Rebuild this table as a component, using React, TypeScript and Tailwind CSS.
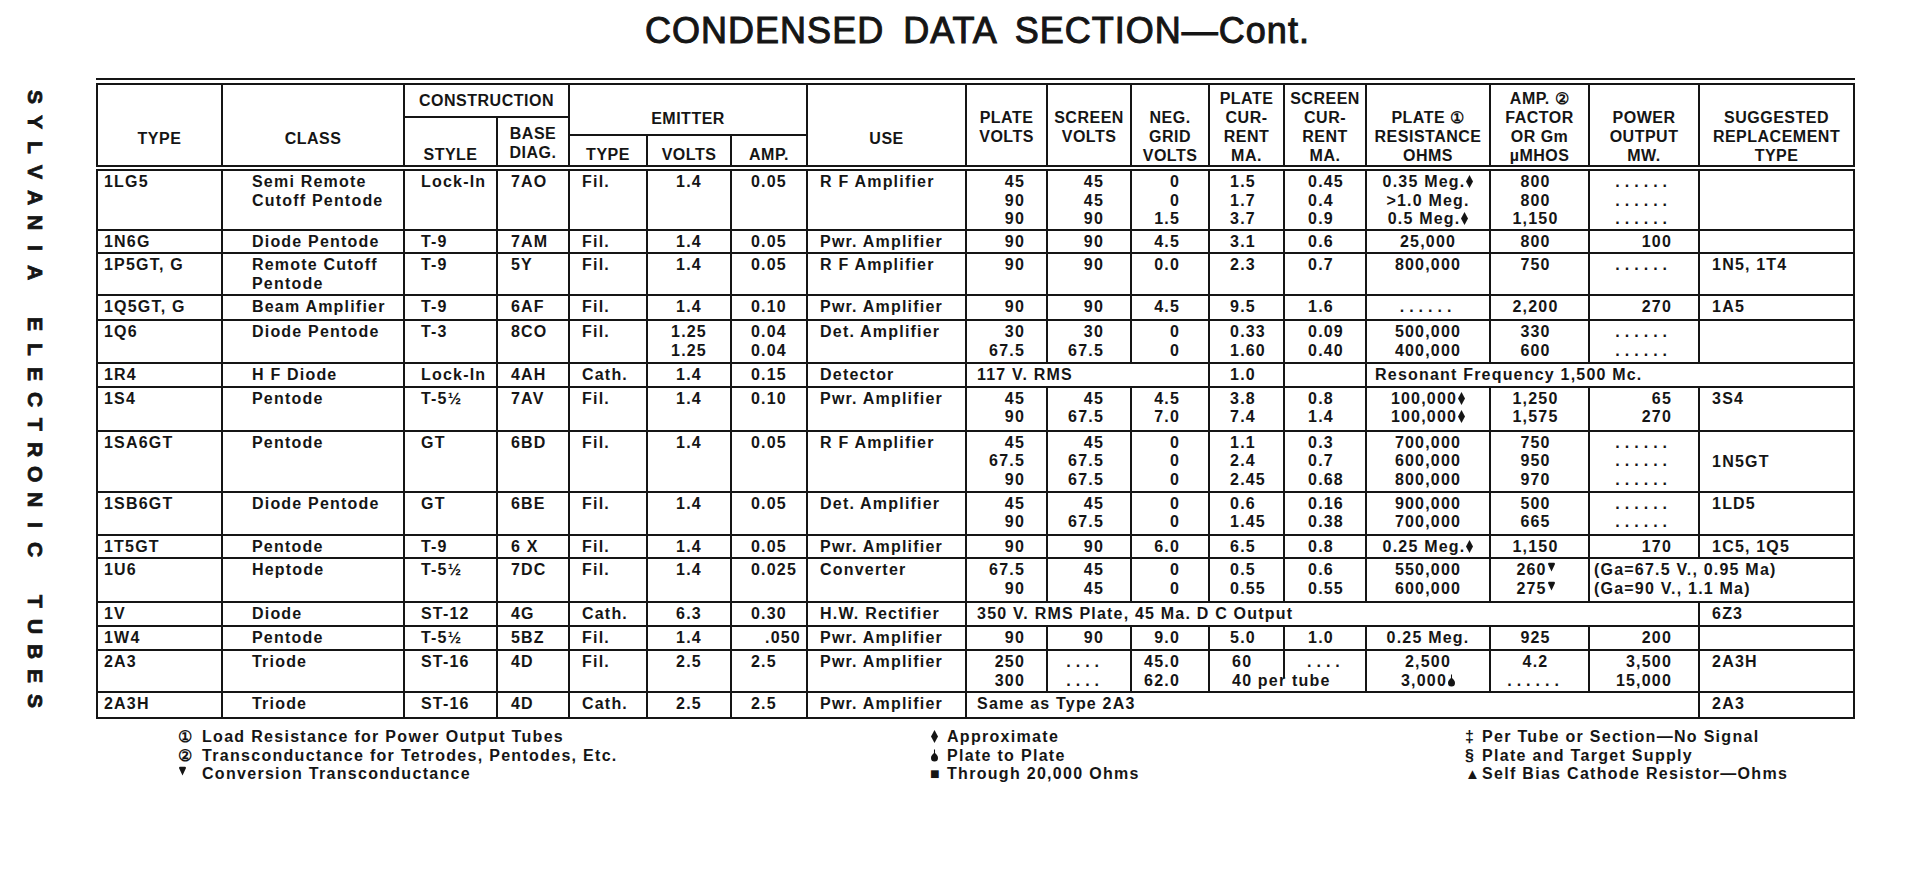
import type { ReactNode } from 'react';

const INK = '#151515';

function Dia() {
  return (
    <svg viewBox="0 0 7 13" className="ml-[1px] inline-block h-[13px] w-[7px] align-[-1px]">
      <path d="M3.5 0L7 6.5L3.5 13L0 6.5Z" fill={INK} />
    </svg>
  );
}

function Drop() {
  return (
    <svg viewBox="0 0 8 14" className="ml-[1px] inline-block h-[13px] w-[7px] align-[-1px]">
      <path d="M3.4 0h1.2v4.2C6.8 6 8 7.8 8 9.8a4 4 0 0 1-8 0C0 7.8 1.2 6 3.4 4.2Z" fill={INK} />
    </svg>
  );
}

function Heart() {
  return (
    <svg viewBox="0 0 8 10" className="ml-[1px] inline-block h-[10px] w-[7px] align-[3px]">
      <path d="M0 1.5C0 .5.8 0 1.8 0h4.4C7.2 0 8 .5 8 1.5L4 10Z" fill={INK} />
    </svg>
  );
}

function Dots({ n }: { n: number }) {
  return <span className="tracking-[5px]">{'.'.repeat(n)}</span>;
}

const d6 = <Dots n={6} />;
const d4 = <Dots n={4} />;

type Lines = ReactNode | ReactNode[];
type Cell = Lines | { c: Lines; span?: number; cls?: string };
type Row = { h: number; cells: Cell[] };

// one class per column: alignment + inset as measured off the scan
const COLS: { w: number; cls: string }[] = [
  { w: 125, cls: 'text-left pl-[6px]' },
  { w: 182, cls: 'text-left pl-[29px]' },
  { w: 93, cls: 'text-left pl-[16px]' },
  { w: 72, cls: 'text-left pl-[13px]' },
  { w: 78, cls: 'text-left pl-[12px]' },
  { w: 84, cls: 'text-center' },
  { w: 76, cls: 'text-left pl-[19px]' },
  { w: 159, cls: 'text-left pl-[12px]' },
  { w: 81, cls: 'text-right pr-[21px]' },
  { w: 84, cls: 'text-right pr-[26px]' },
  { w: 78, cls: 'text-right pr-[28px]' },
  { w: 75, cls: 'text-left pl-[20px]' },
  { w: 82, cls: 'text-left pl-[23px]' },
  { w: 124, cls: 'text-center' },
  { w: 99, cls: 'text-center pr-[8px]' },
  { w: 110, cls: 'text-right pr-[26px]' },
  { w: 155, cls: 'text-left pl-[12px]' },
];

const perTube = (
  <div className="relative pt-[2px]">
    <div className="flex">
      <div className="w-[75px] pl-[22px]">60</div>
      <div className="pl-[22px]">{d4}</div>
    </div>
    <div className="pl-[22px]">40 per tube</div>
    <span className="absolute left-[73px] top-0 h-[27px] w-[2px] bg-[#151515]" />
  </div>
);

const ROWS: Row[] = [
  {
    h: 62,
    cells: ['1LG5', ['Semi Remote', 'Cutoff Pentode'], 'Lock-In', '7AO', 'Fil.', '1.4', '0.05', 'R F Amplifier',
      ['45', '90', '90'], ['45', '45', '90'], ['0', '0', '1.5'], ['1.5', '1.7', '3.7'], ['0.45', '0.4', '0.9'],
      [<>0.35 Meg.<Dia /></>, '>1.0 Meg.', <>0.5 Meg.<Dia /></>], ['800', '800', '1,150'], [d6, d6, d6], ''],
  },
  {
    h: 23,
    cells: ['1N6G', 'Diode Pentode', 'T-9', '7AM', 'Fil.', '1.4', '0.05', 'Pwr. Amplifier',
      '90', '90', '4.5', '3.1', '0.6', '25,000', '800', '100', ''],
  },
  {
    h: 42,
    cells: ['1P5GT, G', ['Remote Cutoff', 'Pentode'], 'T-9', '5Y', 'Fil.', '1.4', '0.05', 'R F Amplifier',
      '90', '90', '0.0', '2.3', '0.7', '800,000', '750', d6, '1N5, 1T4'],
  },
  {
    h: 25,
    cells: ['1Q5GT, G', 'Beam Amplifier', 'T-9', '6AF', 'Fil.', '1.4', '0.10', 'Pwr. Amplifier',
      '90', '90', '4.5', '9.5', '1.6', d6, '2,200', '270', '1A5'],
  },
  {
    h: 42,
    cells: ['1Q6', 'Diode Pentode', 'T-3', '8CO', 'Fil.', ['1.25', '1.25'], ['0.04', '0.04'], 'Det. Amplifier',
      ['30', '67.5'], ['30', '67.5'], ['0', '0'], ['0.33', '1.60'], ['0.09', '0.40'], ['500,000', '400,000'],
      ['330', '600'], [d6, d6], ''],
  },
  {
    h: 24,
    cells: ['1R4', 'H F Diode', 'Lock-In', '4AH', 'Cath.', '1.4', '0.15', 'Detector',
      { c: '117 V. RMS', span: 3, cls: 'text-left pl-[10px]' }, '1.0', '',
      { c: 'Resonant Frequency 1,500 Mc.', span: 4, cls: 'text-left pl-[8px]' }],
  },
  {
    h: 44,
    cells: ['1S4', 'Pentode', 'T-5½', '7AV', 'Fil.', '1.4', '0.10', 'Pwr. Amplifier',
      ['45', '90'], ['45', '67.5'], ['4.5', '7.0'], ['3.8', '7.4'], ['0.8', '1.4'],
      [<>100,000<Dia /></>, <>100,000<Dia /></>], ['1,250', '1,575'], ['65', '270'], '3S4'],
  },
  {
    h: 61,
    cells: ['1SA6GT', 'Pentode', 'GT', '6BD', 'Fil.', '1.4', '0.05', 'R F Amplifier',
      ['45', '67.5', '90'], ['45', '67.5', '67.5'], ['0', '0', '0'], ['1.1', '2.4', '2.45'], ['0.3', '0.7', '0.68'],
      ['700,000', '600,000', '800,000'], ['750', '950', '970'], [d6, d6, d6],
      { c: '1N5GT', cls: 'text-left pl-[12px] !align-middle' }],
  },
  {
    h: 43,
    cells: ['1SB6GT', 'Diode Pentode', 'GT', '6BE', 'Fil.', '1.4', '0.05', 'Det. Amplifier',
      ['45', '90'], ['45', '67.5'], ['0', '0'], ['0.6', '1.45'], ['0.16', '0.38'], ['900,000', '700,000'],
      ['500', '665'], [d6, d6], '1LD5'],
  },
  {
    h: 23,
    cells: ['1T5GT', 'Pentode', 'T-9', '6 X', 'Fil.', '1.4', '0.05', 'Pwr. Amplifier',
      '90', '90', '6.0', '6.5', '0.8', <>0.25 Meg.<Dia /></>, '1,150', '170', '1C5, 1Q5'],
  },
  {
    h: 44,
    cells: ['1U6', 'Heptode', 'T-5½', '7DC', 'Fil.', '1.4', '0.025', 'Converter',
      ['67.5', '90'], ['45', '45'], ['0', '0'], ['0.5', '0.55'], ['0.6', '0.55'], ['550,000', '600,000'],
      [<>260<Heart /></>, <>275<Heart /></>],
      { c: ['(Ga=67.5 V., 0.95 Ma)', '(Ga=90 V., 1.1 Ma)'], span: 2, cls: 'text-left pl-[4px]' }],
  },
  {
    h: 24,
    cells: ['1V', 'Diode', 'ST-12', '4G', 'Cath.', '6.3', '0.30', 'H.W. Rectifier',
      { c: '350 V. RMS Plate, 45 Ma. D C Output', span: 8, cls: 'text-left pl-[10px]' }, '6Z3'],
  },
  {
    h: 24,
    cells: ['1W4', 'Pentode', 'T-5½', '5BZ', 'Fil.', '1.4', { c: '.050', cls: 'text-left pl-[33px]' }, 'Pwr. Amplifier',
      '90', '90', '9.0', '5.0', '1.0', '0.25 Meg.', '925', '200', ''],
  },
  {
    h: 42,
    cells: ['2A3', 'Triode', 'ST-16', '4D', 'Fil.', '2.5', '2.5', 'Pwr. Amplifier',
      ['250', '300'], [d4, d4], ['45.0', '62.0'], { c: perTube, span: 2, cls: '!p-0' },
      ['2,500', <>3,000<Drop /></>], ['4.2', d6], ['3,500', '15,000'], '2A3H'],
  },
  {
    h: 25,
    cells: ['2A3H', 'Triode', 'ST-16', '4D', 'Cath.', '2.5', '2.5', 'Pwr. Amplifier',
      { c: 'Same as Type 2A3', span: 8, cls: 'text-left pl-[10px]' }, '2A3'],
  },
];

function isSpec(c: Cell): c is { c: Lines; span?: number; cls?: string } {
  return typeof c === 'object' && c !== null && !Array.isArray(c) && 'c' in (c as object);
}

function renderLines(v: Lines) {
  if (Array.isArray(v)) return v.map((l, i) => <div key={i}>{l}</div>);
  return v;
}

function DataRow({ row }: { row: Row }) {
  let col = 0;
  return (
    <tr style={{ height: row.h }}>
      {row.cells.map((cell, i) => {
        const spec = isSpec(cell) ? cell : { c: cell as Lines };
        const span = spec.span ?? 1;
        const cls = spec.cls ?? COLS[col].cls;
        col += span;
        return (
          <td
            key={i}
            colSpan={span > 1 ? span : undefined}
            className={`whitespace-nowrap border-2 border-[#151515] pt-[2px] align-top ${cls}`}
          >
            {renderLines(spec.c)}
          </td>
        );
      })}
    </tr>
  );
}

const TH = 'border-2 border-[#151515] align-top text-center font-bold whitespace-nowrap';

const RAIL = [
  ['S', 'Y', 'L', 'V', 'A', 'N', 'I', 'A'],
  ['E', 'L', 'E', 'C', 'T', 'R', 'O', 'N', 'I', 'C'],
  ['T', 'U', 'B', 'E', 'S'],
];

function Rail() {
  return (
    <div className="flex w-[96px] flex-col pl-[24px] pt-[7px]">
      {RAIL.map((word, wi) => (
        <div key={wi} className={wi > 0 ? 'mt-[27px]' : ''}>
          {word.map((ch, i) => (
            <div key={i} className="flex h-[25px] w-[22px] items-center justify-center">
              <span className="text-[21px] font-bold leading-[22px] [-webkit-text-stroke:0.8px_#151515] [writing-mode:vertical-rl]">
                {ch}
              </span>
            </div>
          ))}
        </div>
      ))}
    </div>
  );
}

function Note({ sym, w, children }: { sym: ReactNode; w: string; children: ReactNode }) {
  return (
    <div className="flex items-baseline">
      <span className={`${w} shrink-0`}>{sym}</span>
      <span>{children}</span>
    </div>
  );
}

export default function App() {
  return (
    <div className="flex h-[878px] w-[1913px] flex-col overflow-hidden bg-white font-['Liberation_Sans',Arial,sans-serif] text-[#151515]">
      <div className="ml-[99px] flex w-[1757px] justify-center pt-[13px]">
        <h1 className="text-[36px] font-normal leading-[36px] tracking-[1px] [-webkit-text-stroke:1px_#151515] [word-spacing:8px]">
          CONDENSED DATA SECTION—Cont.
        </h1>
      </div>

      <div className="mt-[29px] flex">
        <Rail />
        <div className="flex flex-col">
          <table className="w-[1757px] table-fixed border-collapse border-2 border-[#151515] text-[16px] font-bold leading-[18.5px] tracking-[1.2px]">
            <colgroup>
              {COLS.map((c, i) => (
                <col key={i} style={{ width: c.w }} />
              ))}
            </colgroup>
            <thead className="border-t-[7px] border-b-[6px] border-double border-[#151515] leading-[19px] tracking-[0.5px]">
              <tr className="h-[35px]">
                <th rowSpan={3} className={`${TH} pt-[44px]`}>TYPE</th>
                <th rowSpan={3} className={`${TH} pt-[44px]`}>CLASS</th>
                <th colSpan={2} className={`${TH} pt-[6px]`}>CONSTRUCTION</th>
                <th colSpan={3} rowSpan={2} className={`${TH} pt-[24px]`}>EMITTER</th>
                <th rowSpan={3} className={`${TH} pt-[44px]`}>USE</th>
                <th rowSpan={3} className={`${TH} pt-[23px]`}>PLATE<br />VOLTS</th>
                <th rowSpan={3} className={`${TH} pt-[23px]`}>SCREEN<br />VOLTS</th>
                <th rowSpan={3} className={`${TH} pt-[23px]`}>NEG.<br />GRID<br />VOLTS</th>
                <th rowSpan={3} className={`${TH} pt-[4px]`}>PLATE<br />CUR-<br />RENT<br />MA.</th>
                <th rowSpan={3} className={`${TH} pt-[4px]`}>SCREEN<br />CUR-<br />RENT<br />MA.</th>
                <th rowSpan={3} className={`${TH} pt-[23px]`}>PLATE ①<br />RESISTANCE<br />OHMS</th>
                <th rowSpan={3} className={`${TH} pt-[4px]`}>AMP. ②<br />FACTOR<br />OR Gm<br />µMHOS</th>
                <th rowSpan={3} className={`${TH} pt-[23px]`}>POWER<br />OUTPUT<br />MW.</th>
                <th rowSpan={3} className={`${TH} pt-[23px]`}>SUGGESTED<br />REPLACEMENT<br />TYPE</th>
              </tr>
              <tr className="h-[17px]">
                <th rowSpan={2} className={`${TH} pt-[27px]`}>STYLE</th>
                <th rowSpan={2} className={`${TH} pt-[6px]`}>BASE<br />DIAG.</th>
              </tr>
              <tr className="h-[33px]">
                <th className={`${TH} pt-[9px]`}>TYPE</th>
                <th className={`${TH} pt-[9px]`}>VOLTS</th>
                <th className={`${TH} pt-[9px]`}>AMP.</th>
              </tr>
            </thead>
            <tbody>
              {ROWS.map((r, i) => (
                <DataRow key={i} row={r} />
              ))}
            </tbody>
          </table>

          <div className="mt-[11px] flex pl-[82px] text-[16px] font-bold leading-[18.5px] tracking-[1.3px]">
            <div className="w-[752px]">
              <Note sym="①" w="w-[24px]">Load Resistance for Power Output Tubes</Note>
              <Note sym="②" w="w-[24px]">Transconductance for Tetrodes, Pentodes, Etc.</Note>
              <Note sym={<Heart />} w="w-[24px]">Conversion Transconductance</Note>
            </div>
            <div className="w-[535px]">
              <Note sym={<Dia />} w="w-[17px]">Approximate</Note>
              <Note sym={<Drop />} w="w-[17px]">Plate to Plate</Note>
              <Note sym="■" w="w-[17px]">Through 20,000 Ohms</Note>
            </div>
            <div>
              <Note sym="‡" w="w-[17px]">Per Tube or Section—No Signal</Note>
              <Note sym="§" w="w-[17px]">Plate and Target Supply</Note>
              <Note sym={<span className="text-[15px] tracking-normal">▲</span>} w="w-[17px]">Self Bias Cathode Resistor—Ohms</Note>
            </div>
          </div>
        </div>
      </div>
    </div>
  );
}
